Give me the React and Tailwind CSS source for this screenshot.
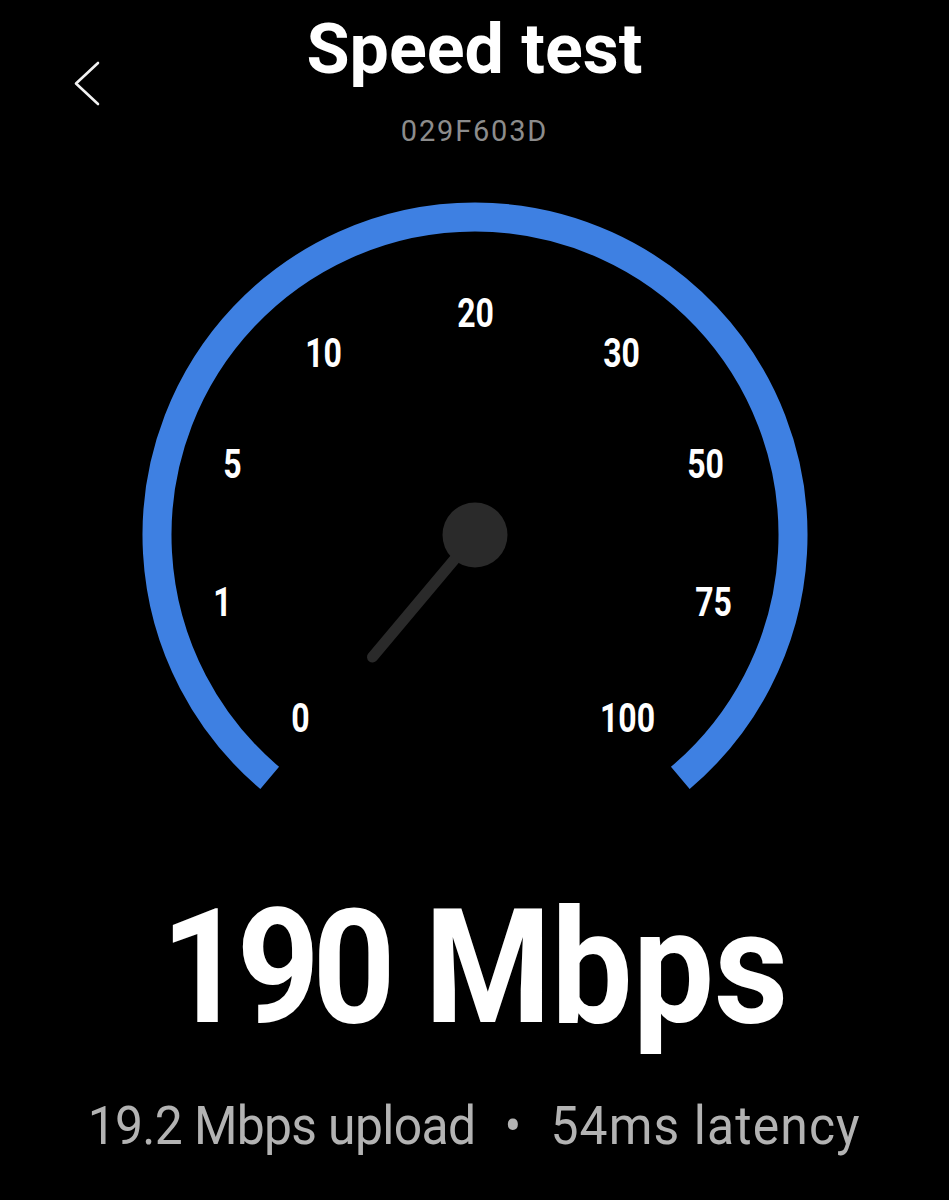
import React from 'react';

const labels = [
  { t: '20', x: 345.5, y: 122 },
  { t: '10', x: 193.5, y: 162 },
  { t: '30', x: 491.5, y: 162 },
  { t: '5', x: 102.5, y: 273 },
  { t: '50', x: 575.5, y: 273 },
  { t: '1', x: 92.5, y: 411 },
  { t: '75', x: 583.5, y: 411 },
  { t: '0', x: 170.5, y: 527 },
  { t: '100', x: 497.5, y: 527 },
];

function Gauge() {
  // arc centre is (345,345), radius 318, gap of ~80deg at the bottom
  return (
    <svg width="690" height="610" viewBox="0 0 690 610" className="block mx-auto">
      <path
        d="M139.7 587.9 A318 318 0 1 1 550.3 587.9"
        fill="none"
        stroke="#3e80e2"
        strokeWidth="29"
      />
      {labels.map((l) => (
        <text
          key={l.t}
          transform={`translate(${l.x} ${l.y + 14.5}) scale(0.8 1)`}
          textAnchor="middle"
          fill="#ffffff"
          fontSize="40"
          fontWeight="700"
          fontFamily="Roboto, sans-serif"
        >
          {l.t}
        </text>
      ))}
      <line
        x1="345"
        y1="345"
        x2="242.5"
        y2="467"
        stroke="#2a2a2a"
        strokeWidth="11"
        strokeLinecap="round"
      />
      <circle cx="345" cy="345" r="32.5" fill="#2a2a2a" />
    </svg>
  );
}

export default function App() {
  return (
    <div className="w-[949px] h-[1200px] bg-black text-white overflow-hidden">
      <div className="grid grid-cols-[1fr_auto_1fr]">
        <div className="pl-[72px] pt-[58px]">
          <svg width="30" height="50" viewBox="0 0 30 50">
            <path
              d="M26 5 L4 25.5 L26 46"
              fill="none"
              stroke="#f2f2f2"
              strokeWidth="2.6"
              strokeLinecap="round"
              strokeLinejoin="round"
            />
          </svg>
        </div>
        <div className="flex flex-col items-center">
          <h1 className="mt-[14px] text-[70px] leading-[70px] font-bold font-['Roboto',sans-serif]">
            Speed test
          </h1>
          <p className="mt-[30px] text-[29px] leading-[34px] tracking-[1.8px] text-[#8c8c8c] font-['Roboto',sans-serif]">
            029F603D
          </p>
        </div>
        <div />
      </div>

      <div className="mt-[42px]">
        <Gauge />
      </div>

      <div className="mt-[88px] text-center">
        <span className="inline-block scale-x-[0.905] whitespace-nowrap text-[160px] leading-[160px] font-bold font-['Roboto',sans-serif]">
          <span className="tracking-[-8px]">190</span> Mbps
        </span>
      </div>

      <div className="mt-[52px] text-center">
        <span className="inline-block scale-x-[0.94] whitespace-nowrap text-[53px] leading-[53px] font-normal text-[#b3b3b3] font-['Roboto',sans-serif]">
          <span className="tracking-[-0.7px]">19.2 Mbps upload</span>
          <span className="mx-[31px]">•</span>
          <span className="tracking-[1.2px]">54ms latency</span>
        </span>
      </div>
    </div>
  );
}
